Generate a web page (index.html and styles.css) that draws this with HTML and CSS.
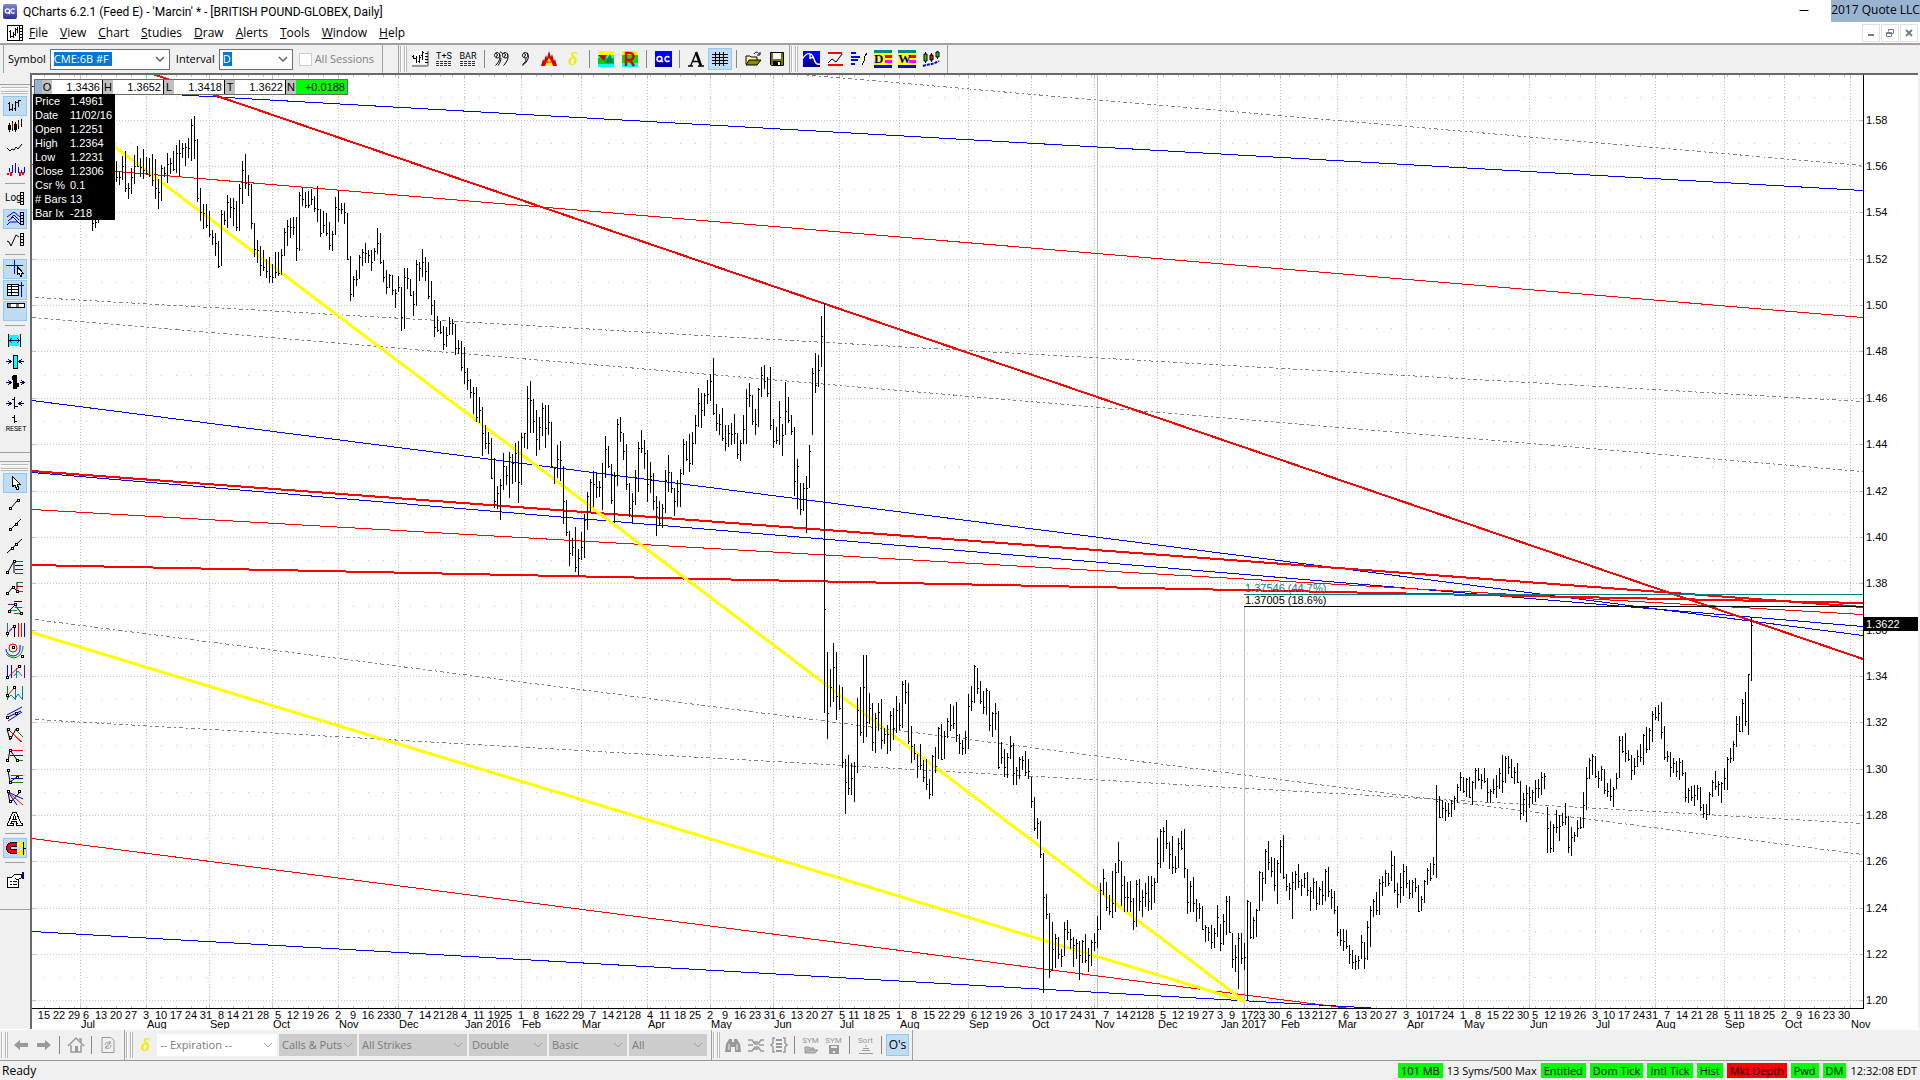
FILE: index.html
```html
<!DOCTYPE html>
<html lang="en">
<head>
<meta charset="utf-8">
<title>QCharts 6.2.1 (Feed E) - 'Marcin' * - [BRITISH POUND-GLOBEX, Daily]</title>
<link rel="stylesheet" href="styles.css">
</head>
<body>
<header class="titlebar">
  <svg class="app-icon" width="14" height="15" viewBox="0 0 14 15"><defs><linearGradient id="ig" x1="0" y1="0" x2="0" y2="1"><stop offset="0" stop-color="#7f86d8"/><stop offset="1" stop-color="#2a2f96"/></linearGradient></defs><rect width="14" height="15" rx="2" fill="url(#ig)"/><circle cx="4.500" cy="7" r="2.200" fill="none" stroke="#fff" stroke-width="1.200"/><path d="M5 8l2 2M11.500 5.500a2.200 2.200 0 1 0 0 3" fill="none" stroke="#fff" stroke-width="1.200"/></svg>
  <h1>QCharts 6.2.1 (Feed E) - 'Marcin' * - [BRITISH POUND-GLOBEX, Daily]</h1>
  <button class="minimize" aria-label="Minimize"></button>
  <span class="copyright">2017 Quote LLC</span>
</header>
<nav class="menubar">
  <svg class="doc-icon" width="16" height="16" viewBox="0 0 16 16" shape-rendering="crispEdges"><path d="M.5.5h15v15H.5zM12.500 1v14M13 3.500h2M13 6.500h2M13 9.500h2M13 12.500h2M3.500 5v8M2 6.500h2M4 11.500h2M6.500 7v6M8.500 3v8M10.500 2v6M7 9.500h2M9 4.500h2" fill="none" stroke="#000"/></svg>
  <button><u>F</u>ile</button><button><u>V</u>iew</button><button><u>C</u>hart</button><button><u>S</u>tudies</button><button><u>D</u>raw</button><button><u>A</u>lerts</button><button><u>T</u>ools</button><button><u>W</u>indow</button><button><u>H</u>elp</button>
  <span class="mdi">
    <button aria-label="Minimize chart"><svg width="8" height="8"><path d="M1 6h6" stroke="#708090" stroke-width="2"/></svg></button>
    <button aria-label="Restore chart"><svg width="8" height="8"><path d="M2.500 2.500v-2h5v4h-2M.5 3.500h5v4h-5zM.5 4.500h5" fill="none" stroke="#708090"/></svg></button>
    <button aria-label="Close chart"><svg width="8" height="8"><path d="M1 1l6 6M7 1l-6 6" stroke="#708090" stroke-width="2"/></svg></button>
  </span>
</nav>

<div class="toolbar top">
  <div class="band symbols">
    <label for="symbol">Symbol</label>
    <span class="combo symbol"><input id="symbol" value="CME:6B #F"><svg width="10" height="6"><path d="M1 1l4 4 4-4" fill="none" stroke="#606060" stroke-width="1.500"/></svg></span>
    <label for="interval">Interval</label>
    <span class="combo interval"><input id="interval" value="D"><svg width="10" height="6"><path d="M1 1l4 4 4-4" fill="none" stroke="#606060" stroke-width="1.500"/></svg></span>
    <label class="check"><input type="checkbox" disabled>All Sessions</label>
  </div>
  <div class="band spacer"></div>
  <div class="band">
    <i class="grip"></i>
    <button aria-label="New chart"><svg viewBox="0 0 18 18" shape-rendering="crispEdges"><path d="M1 1h14v13H1z" fill="#fff"/><path d="M2.500 5v4M1 6.500h2M3 8.500h2M5.500 6v7M8.500 5v8M7 11.500h2M8 7.500h2M11.500 1v9M10 5.500h2M11 2.500h2" stroke="#000"/><path d="M1 15.500h16M16.500 1v15" stroke="#999" stroke-width="2"/><path d="M14 3.500h3M14 6.500h3M14 9.500h3M14 12.500h3" stroke="#000"/></svg></button>
    <button class="word"><span>T+S</span><svg viewBox="0 0 18 6" shape-rendering="crispEdges"><path d="M1 .5h16M1 2.500h16M1 4.500h16" stroke="#333" stroke-dasharray="3 1"/></svg></button>
    <button class="word"><span>BAR</span><svg viewBox="0 0 18 6" shape-rendering="crispEdges"><path d="M1 .5h16M1 2.500h16M1 4.500h16" stroke="#333" stroke-dasharray="3 1"/></svg></button>
    <i class="sep"></i>
    <button aria-label="Quotes"><svg viewBox="0 0 18 18"><path d="M4 6.500a1.500 1.500 0 1 0-1.500-2c-1 3 4 5 5 2 .8-3-2-5-4-3.500M7.500 3.500c1.500 4 0 8-4 12M12 6.500a1.500 1.500 0 1 0-1.500-2c-1 3 4 5 5 2 .8-3-2-5-4-3.500M15.500 3.500c1.500 4 0 8-4 12M8 2c2 0 2 1 2.500 2M9 8c0 2-1 5-3 7.500" fill="none" stroke="#000"/></svg></button>
    <button aria-label="Quote"><svg viewBox="0 0 18 18"><path d="M8 6.500a1.500 1.500 0 1 0-1.500-2c-1 3 4 5 5 2 .8-3-2-5-4-3.500M11 2.500c3 4 1 9-4.500 13M10 8.500c0 3-1 4-3.500 6" fill="none" stroke="#000"/></svg></button>
    <button aria-label="Hot list"><svg viewBox="0 0 18 18"><path d="M1 16l2-7 1 2 2-6 1 3 2-7 2 6 1-3 2 7 1-2 2 7z" fill="#c00"/><path d="M5 16l2-5 2-3 2 3 2 5z" fill="#ff0"/><path d="M6 13l2-3 1 3 2-2v2" fill="#f33"/></svg></button>
    <button class="delta">δ</button>
    <i class="sep"></i>
    <button aria-label="Market map"><svg viewBox="0 0 18 18"><path d="M1 1h16v16H1z" fill="#0ff"/><path d="M1 1h16v4H1z" fill="#ff0"/><path d="M1 8h16v6H1z" fill="#0c0"/><path d="M1 5h9l-3 6z" fill="#c00"/><path d="M8 13l5-9 4 9z" fill="#084"/></svg></button>
    <button aria-label="Rankings"><svg viewBox="0 0 18 18"><path d="M1 1h16v16H1z" fill="#0ff"/><path d="M1 1h16v4H1z" fill="#ff0"/><path d="M1 5h16v8H1z" fill="#0d0"/><path d="M5 16V3h4a3.500 3.500 0 0 1 0 7H5m4 0l4 6" fill="none" stroke="#e00000" stroke-width="2.500"/></svg></button>
    <i class="sep"></i>
    <button aria-label="QCharts home"><svg viewBox="0 0 18 18"><path d="M1 1h17v16H1z" fill="#00f"/><path d="M1 12h17v5H1z" fill="#009"/><circle cx="5.500" cy="9" r="2.500" fill="none" stroke="#fff" stroke-width="1.500"/><path d="M6 10l3 2M15.500 7.500a2.500 2.500 0 1 0 0 3" fill="none" stroke="#fff" stroke-width="1.500"/></svg></button>
    <i class="sep"></i>
    <button aria-label="Text"><svg viewBox="0 0 18 18"><path d="M3.500 16L9 3M6 11.500h6M1 16h5M11 16h6" fill="none" stroke="#000" stroke-width="1.300"/><path d="M9 2l5 14" stroke="#000" stroke-width="2.600"/></svg></button>
    <button class="on" aria-label="Grid"><svg viewBox="0 0 18 18" shape-rendering="crispEdges"><path d="M4.500 2v14M8.500 2v14M12.500 2v14M1 4.500h16M1 7.500h16M1 10.500h16M1 13.500h16" stroke="#000"/></svg></button>
    <i class="sep"></i>
    <button aria-label="Open"><svg viewBox="0 0 18 18"><path d="M2 14V6h4l1 1h6v3" fill="#ff8" stroke="#000"/><path d="M2 15l3-5h12l-4 5z" fill="#880" stroke="#000"/><path d="M10 4c2-3 4-2 5 0m1-2v3h-3" fill="none" stroke="#000"/></svg></button>
    <button aria-label="Save"><svg viewBox="0 0 18 18"><path d="M2.500 2.500h13v13h-12l-1-1z" fill="#770" stroke="#000"/><path d="M5 3h8v6H5z" fill="#fff"/><path d="M5 11h8v5H5z" fill="#000"/><path d="M10 12h2v3h-2z" fill="#fff"/></svg></button>
  </div>
  <div class="band studies">
    <i class="grip"></i>
    <button aria-label="Study"><svg viewBox="0 0 18 18"><path d="M1 1h17v16H1z" fill="#00f"/><path d="M1 17C4 9 7 11 9 4l9 9v4z" fill="#008"/><path d="M1 8c4-6 9-6 11 1 1 4 3 6 6 5M12 9c-1-2-3-2-4 0M8 4v5" fill="none" stroke="#fff" stroke-width="1.400"/></svg></button>
    <button aria-label="Channel"><svg viewBox="0 0 18 18"><path d="M2 3h14M2 15h15" stroke="#f00" stroke-width="2"/><path d="M2 13l4-4 4 3 6-8" fill="none" stroke="#000"/></svg></button>
    <button aria-label="Volume profile"><svg viewBox="0 0 18 18" shape-rendering="crispEdges"><path d="M1 3h5M1 7h9M1 10h7M1 14h4" stroke="#00f" stroke-width="2"/><path d="M12 15l2-4 1-5 2-3" fill="none" stroke="#000"/></svg></button>
    <button class="letter">D</button>
    <button class="letter">W</button>
    <button aria-label="Candles"><svg viewBox="0 0 18 18"><path d="M3.500 2v11M9.500 3v9M15.500 1v8" stroke="#000"/><path d="M2 4h3v7H2zM14 2h3v5h-3z" fill="#0d0" stroke="#000"/><path d="M8 5h3v5H8z" fill="#f00" stroke="#000"/><path d="M1 16c5-2 9-1 16-5" fill="none" stroke="#00f" stroke-width="2" stroke-dasharray="3 1"/></svg></button>
  </div>
</div>

<main class="workspace">
  <aside class="rail">
    <div class="dock first"></div>
    <div class="dock charts">
      <i class="hgrip"></i>
      <button class="on" aria-label="Bars"><svg><path d="M6.500 6v9M5 7.500h2M7 13.500h2M9.500 8v7M12.500 5v10M11 12.500h2M13 6.500h2M15.500 4v7M16 4.500h2" class="k"/></svg></button>
      <button aria-label="Candlesticks"><svg><path d="M6.500 6v9M9.500 4v10M12.500 5v10M15.500 3v9M18.500 2v8" class="k"/><path d="M5.500 8v4h2v-4zM11.500 7v5h2v-5z" class="k"/><path d="M9 6v5M15 5v4" stroke="#b00"/></svg></button>
      <button aria-label="Line"><svg><path d="M4 10l3 3 2-2 2 1 2-3 2 2 4-5" class="k s"/></svg></button>
      <button aria-label="Histogram"><svg><path d="M6.500 9v4M9.500 6v8M12.500 4v10M15.500 8v6M18.500 11v3M21.500 8v6" stroke="#00f"/><path d="M4.500 14v2M7.500 13v4M16.500 13v4M19.500 13v3" stroke="#f00" stroke-width="2"/></svg></button>
      <i class="hsep"></i>
      <button class="log"><span>Log</span><svg><path d="M17.500 4.500h3v12h-3zM18 7.500h3M18 10.500h3M18 13.500h3" class="k"/></svg></button>
      <button class="on" aria-label="Scale to studies"><svg><path d="M4 8l7-5 6 5" class="b s"/><path d="M4 16l3-3h8l3 3M8 9l3-3 5 5" class="b s"/><path d="M5 12l5-4 6 6" class="k s"/><path d="M17.500 3.500h3v12h-3zM18 6.500h3M18 9.500h3M18 12.500h3" class="k"/></svg></button>
      <button aria-label="Scale to data"><svg><path d="M4 11l2 1 2 4 5-11 3 2" class="k s"/><path d="M17.500 3.500h3v12h-3zM18 6.500h3M18 9.500h3M18 12.500h3" class="k"/></svg></button>
      <i class="hsep"></i>
      <button class="on" aria-label="Crosshair"><svg><path d="M11.500 1v14M3 6.500h17" stroke="#00f"/><path d="M14 7v9l2-2 2 4 1-1-1-3h2z" fill="#fff" stroke="#000"/></svg></button>
      <button class="on" aria-label="Data window"><svg><path d="M4 4h11v11H4z" fill="#fff" stroke="#000"/><path d="M4 6.500h11M4 9.500h11M4 12.500h11M8.500 4v11" class="k"/><path d="M18.500 2v15M15 5.500h6" stroke="#00f"/></svg></button>
      <button class="on" aria-label="Quote bar"><svg><path d="M4 2.500h17v4H4z" fill="#fff" stroke="#000"/><path d="M5 3h3v3H5zM13 3h3v3h-3z" fill="#777"/></svg></button>
      <i class="hsep"></i>
      <button aria-label="Bar width fit"><svg><path d="M6 5h10v11H6z" fill="#0ff"/><path d="M5.500 4v13M17.500 4v13" class="k"/><path d="M7 10.500h9M9 8l-2 2.500L9 13M14 8l2 2.500-2 2.500" class="n"/></svg></button>
      <button aria-label="Narrow bars"><svg><path d="M10 4h4v13h-4z" fill="#0ff" stroke="#000"/><path d="M3 10.500h4M5 8l3 2.500L5 13M21 10.500h-4M19 8l-3 2.500L19 13" class="n"/></svg></button>
      <button aria-label="Thick bars"><svg><path d="M12 3v14M9 6h3M12 13h4" stroke="#000" stroke-width="4"/><path d="M3 10.500h4M5 8l3 2.500L5 13M21 10.500h-4M18 8l3 2.500L18 13" class="n"/></svg></button>
      <button aria-label="Wide spacing"><svg><path d="M11.500 4v12M9 6.500h3M12 13.500h3" class="k"/><path d="M3 10.500h4M5 8l3 2.500L5 13M21 10.500h-4M19 8l-3 2.500L19 13" class="n"/></svg></button>
      <button class="reset"><svg><path d="M11.500 1v8M9 3.500h3M12 7.500h2" class="k"/></svg><span>RESET</span></button>
    </div>
    <div class="dock gap"></div>
    <div class="dock draw">
      <i class="hgrip"></i>
      <button class="on" aria-label="Pointer"><svg><path d="M9 3v11l3-2 2 5 2-1-2-5h3z" fill="#fff" stroke="#000"/></svg></button>
      <button aria-label="Segment"><svg><path d="M8 14l6-7" class="k s"/><path d="M6.500 13.500h2v2h-2zM14.500 5.500h2v2h-2z" class="w"/></svg></button>
      <button aria-label="Ray"><svg><path d="M8 14L18 4" class="k s"/><path d="M6.500 13.500h2v2h-2zM12.500 8.500h2v2h-2z" class="w"/></svg></button>
      <button aria-label="Line tool"><svg><path d="M4 17L19 3" class="k s"/><path d="M8.500 11.500h2v2h-2zM12.500 7.500h2v2h-2z" class="w"/></svg></button>
      <button aria-label="Retracement"><svg><path d="M5 15l6-11v12" class="k s"/><path d="M12 4.500h8" class="g"/><path d="M12 8.500h8" class="n"/><path d="M12 12.500h8" class="m"/><path d="M12 16.500h8" class="p"/><path d="M3.500 14.500h2v2h-2zM10.500 3.500h2v2h-2z" class="w"/></svg></button>
      <button aria-label="Extension"><svg><path d="M5 15l5-6 4 4V4" class="k s"/><path d="M14 4.500h6M14 13.500h6" class="g"/><path d="M14 8.500h6" class="m"/><path d="M3.500 14.500h2v2h-2zM9.500 8.500h2v2h-2zM13.500 12.500h2v2h-2z" class="w"/></svg></button>
      <button aria-label="Projection"><svg><path d="M6 12l6-6 6 8" class="k s"/><path d="M11 2.500h8" class="n"/><path d="M5 5.500h9" class="p"/><path d="M12 8.500h7" class="r"/><path d="M6 11.500h8" class="t"/><path d="M11 14.500h8" class="g"/><path d="M5.500 11.500h2v2h-2zM11.500 4.500h2v2h-2zM17.500 13.500h2v2h-2z" class="w"/></svg></button>
      <button aria-label="Time zones"><svg><path d="M4.500 3v14" class="t"/><path d="M11.500 5v12" class="k"/><path d="M15.500 3v14M18.500 3v14" class="r"/><path d="M21.500 3v14" class="b"/><path d="M5 13l6-7" stroke="#f0f"/><path d="M3.500 12.500h2v2h-2zM10.500 5.500h2v2h-2z" class="w"/></svg></button>
      <button aria-label="Arcs"><svg><circle cx="10" cy="7" r="4" class="r s"/><path d="M3 8a7 7 0 0 0 14 0V4" class="b s"/><path d="M3 13c8 8 17 2 17-8" class="g s"/><path d="M9.500 5.500h2v2h-2zM18.500 14.500h2v2h-2z" class="w"/></svg></button>
      <button aria-label="Cycles"><svg><path d="M4.500 3v13M8.500 3v13" class="b"/><path d="M11 14l4-5 4 5" class="t s"/><path d="M21.500 3v13" class="p"/><path d="M13.500 6v10" class="t"/><path d="M5 15L17 4" class="r s"/><path d="M3.500 14.500h2v2h-2zM15.500 3.500h2v2h-2z" class="w"/></svg></button>
      <button aria-label="Cycle lines"><svg><path d="M4.500 3v14" class="g"/><path d="M12.500 6v11M19.500 3v14M5 15l3-3 4 4 3-5 4 5" class="t s"/><path d="M5 12l7-8" class="r s"/><path d="M3.500 11.500h2v2h-2zM10.500 3.500h2v2h-2z" class="w"/></svg></button>
      <button aria-label="Parallel lines"><svg><path d="M4 11L19 3M5 17l14-9" class="b s"/><path d="M5 13l13-6" class="k s"/><path d="M3.500 12.500h2v2h-2zM12.500 8.500h2v2h-2z" class="w"/></svg></button>
      <button aria-label="Pitchfork"><svg><path d="M4 4l3 11 6-11" class="k s"/><path d="M5 4l13 13M9 8l10 9" class="r s"/><path d="M14 6l6 6" class="g s"/><path d="M4.500 3.500h2v2h-2zM6.500 11.500h2v2h-2zM13.500 3.500h2v2h-2z" class="w"/></svg></button>
      <button aria-label="Levels"><svg><path d="M5 15l2-11 7 10" class="k s"/><path d="M7 4.500h13" class="r"/><path d="M7 9.500h13" class="b"/><path d="M14 14.500h6" class="g"/><path d="M3.500 13.500h2v2h-2zM6.500 3.500h2v2h-2zM13.500 13.500h2v2h-2z" class="w"/></svg></button>
      <button aria-label="Price levels"><svg><path d="M5 3l2 12 7-5" class="k s"/><path d="M8 8.500h12" class="r"/><path d="M8 11.500h12" class="b"/><path d="M8 15.500h12" class="g"/><path d="M4.500 2.500h2v2h-2zM6.500 14.500h2v2h-2zM13.500 9.500h2v2h-2z" class="w"/></svg></button>
      <button aria-label="Fan"><svg><path d="M5 4l2 11L17 4" class="k s"/><path d="M5 4l15 7M5 4l9 13" class="b s"/><path d="M5 4l15 13" class="r s"/><path d="M4.500 2.500h2v2h-2zM6.500 12.500h2v2h-2zM15.500 2.500h2v2h-2z" class="w"/></svg></button>
      <button aria-label="Label"><svg><path d="M4 16v-2h1l5-11h3l5 11h1v2h-6v-2h1l-1-2H9l-1 2h2v2zM10 10h3l-1.500-4z" fill="#fff" stroke="#000" fill-rule="evenodd"/></svg></button>
      <i class="hsep"></i>
      <button class="on" aria-label="Magnet"><svg><path d="M14 6.500H9a3.500 3.500 0 0 0 0 7h5" fill="none" stroke="#000" stroke-width="5"/><path d="M14 6.500H9a3.500 3.500 0 0 0 0 7h5" fill="none" stroke="#e00" stroke-width="3"/><path d="M15 5v4M15 12v4" stroke="#fff" stroke-width="2"/><path d="M18 4v5M18 12v5" stroke="#ff0" stroke-width="4" stroke-dasharray="1 1"/><path d="M20.500 4v13M20 10.500h3" stroke="#000"/></svg></button>
      <i class="hsep"></i>
      <button class="props" aria-label="Properties"><svg><path d="M4.500 6.500h11v10h-11zM7 10.500h2M10 10.500h4M7 13.500h2M10 13.500h4" fill="#fff" stroke="#000"/><path d="M8 7l4-4h6v4l-4 2-2-2" fill="#fff" stroke="#000"/><path d="M19 1h2v7h-2z" fill="#008"/></svg></button>
    </div>
    <div class="dock last"></div>
  </aside>

  <section class="chart">
    <div class="plot">
      <svg id="plot" viewBox="32 75 1832 934" preserveAspectRatio="none" shape-rendering="crispEdges"></svg>
      <svg id="notes" class="notes"></svg>
      <div class="ohlc"><i></i><b>O</b><span>1.3436</span><b>H</b><span>1.3652</span><b>L</b><span>1.3418</span><b>T</b><span>1.3622</span><b>N</b><span class="up">+0.0188</span></div>
      <dl class="readout">
        <dt>Price</dt><dd>1.4961</dd><dt>Date</dt><dd>11/02/16</dd><dt>Open</dt><dd>1.2251</dd><dt>High</dt><dd>1.2364</dd><dt>Low</dt><dd>1.2231</dd><dt>Close</dt><dd>1.2306</dd><dt>Csr %</dt><dd>0.1</dd><dt># Bars</dt><dd>13</dd><dt>Bar Ix</dt><dd>-218</dd>
      </dl>
    </div>
    <svg id="prices" class="prices"></svg>
    <svg id="dates" class="dates"></svg>
  </section>
</main>

<div class="toolbar bottom">
  <div class="band nav">
    <i class="grip"></i>
    <button aria-label="Back"><svg viewBox="0 0 18 18"><path d="M2 9l6-5v3h8v4H8v3z" fill="#999"/></svg></button>
    <button aria-label="Forward"><svg viewBox="0 0 18 18"><path d="M16 9l-6-5v3H2v4h8v3z" fill="#999"/></svg></button>
    <i class="sep"></i>
    <button aria-label="Home"><svg viewBox="0 0 18 18"><path d="M1 10l8-8 8 8M4 9v7h10V9M12 3h2v3" fill="none" stroke="#999" stroke-width="1.500"/><path d="M8 10h3v6H8z" fill="#999"/></svg></button>
    <i class="sep"></i>
    <button aria-label="Refresh"><svg viewBox="0 0 18 18"><path d="M3 1.500h9l3 3v12H3z" fill="none" stroke="#999"/><path d="M6 9c0-3 4-4 6-1M12 9c0 4-4 4-6 2M11 5v3H8M7 13v-3h3" fill="none" stroke="#999"/></svg></button>
  </div>
  <div class="band options">
    <i class="grip"></i>
    <button class="delta">δ</button>
    <label class="pick wide open"><select aria-label="Expiration" disabled><option>-- Expiration --</option></select><svg width="10" height="6"><path d="M1 1l4 4 4-4" fill="none" stroke="#a8a8a8"/></svg></label>
    <label class="pick"><select aria-label="Type" disabled><option>Calls &amp; Puts</option></select><svg width="10" height="6"><path d="M1 1l4 4 4-4" fill="none" stroke="#a0a0a0"/></svg></label>
    <label class="pick mid"><select aria-label="Strikes" disabled><option>All Strikes</option></select><svg width="10" height="6"><path d="M1 1l4 4 4-4" fill="none" stroke="#a0a0a0"/></svg></label>
    <label class="pick"><select aria-label="Layout" disabled><option>Double</option></select><svg width="10" height="6"><path d="M1 1l4 4 4-4" fill="none" stroke="#a0a0a0"/></svg></label>
    <label class="pick"><select aria-label="Columns" disabled><option>Basic</option></select><svg width="10" height="6"><path d="M1 1l4 4 4-4" fill="none" stroke="#a0a0a0"/></svg></label>
    <label class="pick"><select aria-label="Filter" disabled><option>All</option></select><svg width="10" height="6"><path d="M1 1l4 4 4-4" fill="none" stroke="#a0a0a0"/></svg></label>
  </div>
  <div class="band tools">
    <i class="grip"></i>
    <button aria-label="Find"><svg viewBox="0 0 18 18"><path d="M1 16l1-8 3-5h3v3h2V3h3l3 5 1 8h-6v-5H7v5z" fill="#999"/><path d="M5 8v6M13 8v6" stroke="#eee"/></svg></button>
    <button aria-label="Merge"><svg viewBox="0 0 18 18"><path d="M1 4h4l3 4h3l3-4h3M1 15h4l3-4h3l3 4h3M1 9h5M12 9h5M7 6h4M7 13h4" fill="none" stroke="#999" stroke-width="1.500"/></svg></button>
    <button aria-label="Group"><svg viewBox="0 0 18 18"><path d="M5 2H3v5L1 9l2 2v5h2M13 2h2v5l2 2-2 2v5h-2" fill="none" stroke="#999" stroke-width="1.500"/><path d="M6 4h6M6 8h6M6 11h6M6 15h6" stroke="#999" stroke-width="2"/></svg></button>
    <i class="sep"></i>
    <button class="word dim"><span>SYM</span><svg viewBox="0 0 18 9"><path d="M3 8V2h4l1 1h4v2M3 8l3-3h10l-3 3z" fill="#bbb" stroke="#999"/></svg></button>
    <button class="word dim"><span>SYM</span><svg viewBox="0 0 18 9"><path d="M4 0h10v9H4z" fill="#999"/><path d="M6 1h6v2H6zM8 6h2v2H8z" fill="#eee"/></svg></button>
    <i class="sep"></i>
    <button class="word dim"><span>Sort</span><svg viewBox="0 0 18 9"><path d="M8 1h2M6 3.500h6M5 5.500h8M2 8.500h14" stroke="#999"/></svg></button>
    <i class="sep"></i>
    <button class="on">O's</button>
  </div>
</div>

<footer class="status">
  <span class="ready">Ready</span>
  <span class="ok">101 MB</span><span class="count">13 Syms/500 Max</span><span class="ok">Entitled</span><span class="ok">Dom Tick</span><span class="ok">Intl Tick</span><span class="ok">Hist</span><span class="bad">Mkt Depth</span><span class="ok">Pwd</span><span class="ok">DM</span><span>12:32:08 EDT</span>
</footer>
<script src="chart.js"></script>
</body>
</html>
```

FILE: styles.css
```css
* { box-sizing: border-box; }
body { margin: 0; height: 100vh; display: flex; flex-direction: column; overflow: hidden; background: #f0f0f0; color: #000; font: 12px/16px "Open Sans", "Noto Sans", sans-serif; }
button, input, select { font: inherit; color: inherit; margin: 0; }
button { padding: 0; border: 1px solid transparent; background: none; display: grid; place-items: center; }
i { flex: none; }

.titlebar { flex: none; height: 22px; background: #fff; display: flex; align-items: center; padding-left: 3px; gap: 6px; }
.titlebar h1 { margin: 0; flex: 1; font: 400 12px/16px Roboto, "Open Sans", sans-serif; padding-top: 2px; }
.minimize { width: 10px; border-top: 1px solid #000; height: 1px; margin-right: 16px; }
.copyright { width: 89px; height: 22px; background: #99b4d1; text-align: center; line-height: 20px; }

.menubar { flex: none; height: 21px; background: #fff; display: flex; align-items: center; padding: 0 2px 0 7px; }
.menubar > button { padding: 0 5px; display: block; }
.mdi { margin-left: auto; display: flex; gap: 1px; }
.mdi button { width: 18px; height: 18px; border: 1px solid #e0e0e0; }

.toolbar { flex: none; display: flex; background: #f0f0f0; }
.toolbar.top { height: 30px; border-top: 2px solid #a0a0a0; }
.toolbar.bottom { height: 32px; border-top: 1px solid #fff; border-bottom: 1px solid #999; }
.band { display: flex; align-items: center; border-right: 1px solid #a0a0a0; }
.band button { width: 24px; height: 22px; }
.band button svg { width: 18px; height: 18px; }
.grip { width: 7px; height: 26px; margin: 0 1px; border: solid #b8b8b8; border-width: 0 1px; background: linear-gradient(90deg, #fff 1px, transparent 1px 3px, #b8b8b8 3px 4px, #fff 4px); }
.sep { width: 1px; height: 18px; background: #888; margin: 0 4px; }
.band .on, .rail .on { background: #c0dcf3; border-color: #90c8f6; }

.symbols { width: 380px; margin-left: 3px; border-left: 1px solid #a0a0a0; padding-left: 4px; font-size: 11px; }
.spacer { width: 16px; }
.combo { display: flex; align-items: center; justify-content: space-between; height: 21px; margin: 0 6px 0 4px; padding: 0 4px 0 3px; background: #fff; border: 1px solid #707070; }
.combo input { border: 0; padding: 0; height: 14px; background: #0078d7; color: #fff; font: 11px/14px "Open Sans", sans-serif; }
.combo.symbol { width: 120px; }
.combo.symbol input { width: 58px; }
.combo.interval { width: 74px; }
.combo.interval input { width: 9px; }
.check { display: flex; align-items: center; gap: 3px; color: #808080; white-space: nowrap; }
.check input { appearance: none; width: 13px; height: 13px; border: 1px solid #ccc; background: #fff; }
.band .word { display: flex; flex-direction: column; align-items: center; justify-content: center; font: 9px/9px Roboto, sans-serif; }
.band .word svg { height: 6px; }
.band .word.dim { color: #999; font-size: 8px; line-height: 8px; }
.band .word.dim svg { height: 9px; }
.band .delta { color: #ee0; font: italic bold 18px/18px "Liberation Serif", serif; }
.band .letter { width: 18px; height: 18px; margin: 0 3px; border: 0; background: linear-gradient(#088 3px, transparent 3px 15px, #00f 15px), linear-gradient(90deg, #ff0 11px, transparent 11px), linear-gradient(#ff0 5px, #f00 5px 8px, #ff0 8px 10px, #f0f 10px 13px, #ff0 13px); color: #008; font: bold 13px/18px "Liberation Serif", serif; justify-items: start; }
.studies { width: 158px; }

.workspace { flex: 1; min-height: 0; display: flex; }
.rail { width: 30px; display: flex; flex-direction: column; }
.dock { flex: none; border-bottom: 1px solid #a0a0a0; padding-left: 3px; }
.dock.first { height: 12px; }
.dock.charts { height: 368px; }
.dock.gap { height: 9px; }
.dock.draw { height: 448px; }
.dock.last { flex: 1; border: 0; }
.rail button { width: 24px; height: 20px; margin-bottom: 1px; display: block; position: relative; }
.rail svg { display: block; width: 24px; height: 20px; margin: -1px; shape-rendering: crispEdges; fill: none; }
.rail .s { shape-rendering: auto; }
.rail .props { margin-top: 8px; }
.rail .log, .rail .reset { font: 10px/18px Roboto, sans-serif; }
.rail .log span { position: absolute; left: 1px; top: 0; }
.rail .reset span { position: absolute; left: 0; width: 24px; bottom: 0; font-size: 7px; line-height: 7px; text-align: center; }
.hgrip { display: block; height: 7px; margin: 2px 2px 2px -2px; border: solid #b8b8b8; border-width: 1px 0; background: linear-gradient(#fff 1px, transparent 1px 3px, #b8b8b8 3px 4px, #fff 4px); }
.hsep { display: block; width: 20px; height: 1px; margin: 4px 2px; background: #a0a0a0; }
.k { stroke: #000; } .b { stroke: #00f; } .n { stroke: #008; } .r { stroke: #f00; } .g { stroke: #080; } .m { stroke: #800; } .p { stroke: #808; } .t { stroke: #088; } .w { stroke: #000; fill: #fff; }

.chart { flex: 1; min-width: 0; display: grid; grid-template: 1fr 20px / 1fr 54px; background: #fff; border: solid #696969; border-width: 2px 0 0 2px; margin-right: 2px; font: 11px/14px "Liberation Sans", Arial, sans-serif; }
.chart svg { display: block; width: 100%; height: 100%; overflow: visible; }
.plot { position: relative; min-width: 0; min-height: 0; }
.plot svg { position: absolute; inset: 0; }
.plot #plot { overflow: hidden; }
.prices { min-height: 0; }
.chart text { fill: #000; }
.chart .teal { fill: #088080; }
.chart .now { fill: #fff; }
.ohlc { position: absolute; left: 2px; top: 4px; display: flex; height: 16px; border: 1px solid #696969; background: #fff; }
.ohlc i { width: 7px; background: #99b4d1; }
.ohlc b { width: 10px; background: #c0c0c0; font-weight: 400; text-align: center; }
.ohlc span { width: 51px; padding-right: 2px; text-align: right; border-right: 1px solid #000; }
.ohlc .up { background: #0f0; border: 0; }
.readout { position: absolute; left: 1px; top: 19px; margin: 0; width: 82px; background: #000; color: #fff; display: grid; grid-template-columns: 35px 1fr; padding-left: 2px; }
.readout dd { margin: 0; }

.bottom .band button { width: 23px; }
.nav { width: 125px; }
.options { width: 587px; }
.pick { display: grid; grid-template-columns: 1fr 14px; align-items: center; width: 78px; height: 22px; margin-right: 2px; background: #ccc; color: #7a7a7a; }
.pick.wide { width: 120px; }
.pick.mid { width: 108px; }
.pick.open { background: #fff; }
.pick select { appearance: none; grid-area: 1 / 1 / 2 / 3; width: 100%; height: 22px; border: 0; padding: 0 3px; background: none; opacity: 1; font-size: 11px; color: #7a7a7a; }
.pick svg { grid-area: 1 / 2; }
.tools { width: 201px; }

.status { flex: none; height: 19px; display: flex; align-items: center; gap: 4px; padding: 0 3px 0 2px; font-size: 11px; white-space: nowrap; }
.ready { margin-right: auto; font-size: 12px; }
.ok, .bad { padding: 0 3px; line-height: 15px; background: #0f0; }
.bad { background: #f00; }
```

FILE: chart.js
```js
// Daily bars, 3 px apart. Each segment holds high,low,close as offsets
// below `top`, in 1/unit px.
const segments = [
  { x: 92, top: 80, unit: 3, bars: '380,452,430 380,443,425 380,430,400' },
  { x: 116, top: 80, unit: 3, bars: '243,307,290 272,315,291 228,300,257 213,335,325 310,357,325 265,342,292 225,312,257 198,262,257 234,292,262 208,298,270 231,286,280 235,292,285 223,318,300 238,357,325 296,386,337 255,363,265 262,292,280 220,308,252 234,282,250 214,272,268 195,280,218 180,291,220 189,233,205 189,258,200 174,235,203 117,242,135 108,236,180 177,365,355 323,422,395 371,447,398 373,444,435 393,470,463 450,495,470 458,528,490 483,563,557 390,558,403 394,434,420 345,443,365 353,413,380 353,437,385 362,452,440 312,453,325 242,372,270 222,327,310 285,347,313 312,446,428 428,530,507 480,548,510 498,588,556 511,573,560 538,593,572 530,609,588 553,609,590 515,593,575 516,587,578 508,585,525 443,528,457 420,497,437 414,473,440 412,464,440 412,543,505 336,512,346 323,377,357 335,383,376 332,384,375 327,376,358 348,395,385 318,425,388 387,470,458 393,458,435 400,467,460 427,510,495 453,513,463 350,465,380 333,427,387 368,403,387 370,432,397 400,540,537 527,662,643 588,650,597 570,618,598 526,597,532 508,558,517 489,550,520 510,548,525 510,573,545 504,544,512 443,523,490 460,552,545 540,607,590 570,642,620 583,625,585 585,644,630 627,683,640 588,635,620 620,753,712 563,746,592 565,627,595 597,648,645 632,708,672 540,677,553 545,602,565 508,591,545 530,603,572 546,657,648 603,705,675 659,771,740 708,755,750 722,763,755 737,810,793 740,802,765 711,766,730 717,766,730 731,825,803 780,822,805 783,872,860 802,912,875 865,930,900 896,954,935 922,1002,940 922,1025,1010 950,1028,990 982,1128,1060 1036,1108,1090 1057,1122,1088 1073,1197,1193 1133,1284,1262 1217,1287,1240 1197,1320,1215 1118,1230,1158 1157,1215,1185 1117,1254,1130 1122,1212,1148 1088,1205,1120 1083,1270,1205 1058,1215,1070 1058,1105,1060 917,1107,953 903,1060,960 957,1060,1022 990,1128,1077 1010,1109,1042 968,1067,985 976,1104,1043 975,1064,1025 1025,1164,1157 1160,1212,1165 1095,1193,1138 1083,1203,1140 1157,1332,1262 1260,1368,1357 1353,1457,1420 1373,1428,1400 1342,1475,1460 1407,1487,1433 1356,1440,1402 1303,1435,1320 1237,1350,1247 1197,1300,1206 1173,1282,1212 1180,1253,1220 1203,1250,1220 1148,1290,1178 1067,1195,1108 1098,1163,1158 1152,1272,1260 1177,1330,1187 1017,1217,1033 1010,1085,1055 1058,1140,1113 1092,1230,1213 1210,1312,1285 1240,1330,1262 1170,1275,1192 1085,1235,1105 1050,1118,1105 1080,1168,1120 1110,1265,1213 1145,1240,1187 1178,1290,1262 1247,1368,1280 1262,1338,1330' },
  { x: 662, top: 280, unit: 2.8, bars: '627,693,638 532,652,560 490,593,537 537,597,583 583,661,620 560,636,590 528,636,540 445,545,460 452,507,502 430,538,512 425,517,457 377,458,407 302,412,343 315,413,365 315,380,323 280,347,320 264,338,282 217,377,373 347,423,400 374,433,404 358,452,443 407,479,455 407,468,429 400,463,430 375,460,427 427,501,487 447,507,457 378,458,418 305,458,330 288,355,322 323,406,395 360,434,404 302,412,305 243,328,267 237,304,284 272,328,315 244,420,407 388,471,451 411,460,447 338,462,384 404,493,433 286,434,368 328,400,393 377,433,424 412,606,564 500,640,522 567,658,640 568,647,583 549,709,583 462,582,480 246,434,260 204,317,293 210,299,253 101,244,158 65,1212,922 1042,1286,1211 1088,1195,1140 1016,1182,1084 1042,1232,1165 1134,1204,1197 1140,1365,1350 1341,1496,1405 1330,1442,1422 1351,1442,1395 1350,1462,1360 1170,1380,1205 1140,1278,1265 1050,1297,1140 1050,1280,1238 1156,1242,1198 1183,1320,1293 1212,1323,1226 1184,1263,1210 1173,1313,1288 1255,1300,1272 1245,1328,1272 1206,1320,1217 1198,1288,1255 1165,1268,1205 1184,1260,1245 1122,1254,1130 1120,1188,1153 1128,1300,1292 1250,1352,1305 1298,1345,1325 1327,1395,1360 1300,1372,1358 1345,1405,1392 1342,1427,1412 1397,1452,1440 1330,1445,1333 1308,1380,1362 1252,1340,1255 1243,1345,1340 1262,1342,1278 1226,1282,1235 1186,1262,1245 1193,1258,1240 1182,1293,1273 1272,1327,1297 1288,1330,1310 1263,1327,1280 1160,1312,1193 1137,1207,1180 1078,1183,1082 1085,1160,1142 1123,1186,1180 1150,1215,1195 1143,1218,1148 1150,1263,1245 1210,1280,1213 1184,1260,1213 1207,1370,1364' },
  { x: 1001, top: 560, unit: 3, bars: '546,611,590 567,650,620 580,654,592 528,597,558 549,675,638 622,674,630 590,656,596 587,629,600 573,648,637 597,658,632 650,743,724 711,812,805 773,837,790 783,893,883 880,1299,1012 1002,1077,1063 1060,1253,1232 1085,1232,1168 1122,1223,1135 1130,1197,1182 1168,1221,1187 1087,1188,1108 1080,1139,1115 1107,1168,1138 1130,1222,1155 1138,1197,1148 1142,1260,1185 1140,1210,1142 1121,1210,1200 1165,1235,1185 1141,1217,1147 1120,1172,1147 1068,1163,1108 968,1110,990 927,1005,955 965,1052,1042 1005,1065,1052 933,1075,1030 909,1055,935 846,938,900 903,1037,975 947,1055,1012 965,1055,1012 962,1055,1024 1013,1110,1082 960,1101,972 958,1053,1023 990,1070,1012 970,1042,1000 947,1052,1023 947,1050,975 953,1028,965 834,970,910 808,925,814 801,905,814 780,868,850 846,927,883 828,942,920 888,940,925 834,925,850 813,870,865 807,953,925 927,1062,1027 962,1055,978 950,1057,1030 1017,1087,1045 1030,1077,1045 1037,1111,1108 1095,1145,1102 1100,1143,1117 1095,1167,1145 1103,1165,1120 1035,1132,1070 1093,1172,1150 1062,1155,1082 1008,1125,1022 1008,1118,1115 1118,1225,1198 1155,1236,1190 1118,1287,1135 1120,1213,1195 1150,1230,1190 1020,1322,1023 1026,1137,1130 1071,1137,1080 1047,1132,1050 933,1052,937 935,1023,955 867,972,873 843,930,905 890,950,933 893,992,975 900,1032,910 840,940,857 825,957,950 942,992,978 968,1020,985 935,1077,965 933,990,943 911,985,963 957,1007,975 940,985,955 937,1007,990 980,1053,993 955,1017,965 963,1050,1030 980,1035,988 963,1035,1005 927,1022,932 921,1010,993 987,1048,1010 993,1062,1050 1038,1128,1117 1107,1157,1140 1107,1173,1142 1110,1167,1157 1155,1213,1183 1170,1227,1205 1185,1230,1203 1188,1226,1200 1125,1197,1147 1147,1227,1195 1083,1200,1100 1037,1162,1050 1018,1071,1023 996,1065,1050 957,1065,970 948,1007,965 931,980,940 938,977,970 873,962,915 888,1000,990 970,1045,1003 940,1029,980 911,1008,932 917,985,970 960,1017,1000 960,1014,965 954,997,980 975,1055,1052 1008,1053,1018 960,1029,963 924,975,930 909,963,955 891,945,912 675,953,723 708,773,770 720,774,745 726,783,750 730,770,760 720,770,728 708,750,715 672,728,682 635,693,652 650,698,693 653,711,658 650,713,710 662,735,667 625,686,630 625,663,657 641,687,660 625,668,662 655,725,697 687,728,693 657,702,688 645,713,677 623,687,640 585,698,662 587,668,595 588,642,620 597,655,650 620,671,635 609,668,665 663,780,758 698,767,718 675,786,700 682,745,710 690,731,695 660,725,685 656,713,685 635,706,650 640,688,648 740,878,805 784,878,865 792,877,800 750,820,800 765,843,797 760,798,785 728,795,772 768,878,862 800,887,830 816,845,825 780,830,803 770,808,800 697,803,735 622,750,653 595,657,600 583,645,587 587,655,648 632,683,655 618,663,628 627,702,690 668,710,692 657,723,708 682,741,687 640,687,653 528,655,540 527,578,574 518,606,578 570,602,597 585,660,630 593,645,617 570,621,588 552,607,590 522,615,524 502,578,567 503,570,510 453,545,463 440,480,470 434,483,460 426,537,517 498,600,590 573,605,588 577,650,620 594,640,608 603,650,632 594,660,605 600,648,640 637,726,710 684,728,690 678,722,712 675,738,705 675,720,685 682,752,742 732,774,758 732,780,762 697,765,703 660,710,667 632,690,677 663,707,673 666,728,670 625,690,655 592,690,598 564,608,593 543,602,553 468,560,493 468,515,513 417,516,430 396,498,482 343,525,343 172,362,195' }
];

const months = [[80, 'Jul'], [146, 'Aug'], [209, 'Sep'], [272, 'Oct'], [338, 'Nov'], [398, 'Dec'], [464, 'Jan 2016'], [521, 'Feb'], [581, 'Mar'], [647, 'Apr'], [710, 'May'], [773, 'Jun'], [839, 'Jul'], [899, 'Aug'], [968, 'Sep'], [1031, 'Oct'], [1094, 'Nov'], [1157, 'Dec'], [1220, 'Jan 2017'], [1280, 'Feb'], [1337, 'Mar'], [1406, 'Apr'], [1463, 'May'], [1529, 'Jun'], [1595, 'Jul'], [1655, 'Aug'], [1724, 'Sep'], [1784, 'Oct'], [1850, 'Nov']];

const weeks = '44:15 59:22 74:29 86:6 101:13 116:20 131:27 146:3 161:10 176:17 191:24 206:31 221:8 233:14 248:21 263:28 278:5 293:12 308:19 323:26 338:2 353:9 368:16 383:23 395:30 410:7 425:14 439:21 452:28 464:4 479:11 494:19 506:25 521:1 536:8 551:16 563:22 578:29 593:7 608:14 622:21 635:28 650:4 665:11 680:18 695:25 710:2 725:9 740:16 755:23 770:31 782:6 797:13 812:20 827:27 842:5 854:11 869:18 884:25 899:1 914:8 929:15 944:22 959:29 974:6 986:12 1001:19 1016:26 1031:3 1046:10 1061:17 1076:24 1090:31 1106:7 1122:14 1136:21 1148:28 1163:5 1178:12 1193:19 1208:27 1220:3 1232:9 1247:17 1259:23 1274:30 1289:6 1304:13 1318:21 1331:27 1346:6 1361:13 1376:20 1391:27 1406:3 1422:10 1434:17 1448:24 1463:1 1478:8 1493:15 1508:22 1523:30 1535:5 1550:12 1565:19 1580:26 1595:3 1609:10 1624:17 1639:24 1652:31 1667:7 1682:14 1697:21 1712:28 1727:5 1739:11 1754:18 1769:25 1784:2 1799:9 1814:16 1829:23 1844:30'
  .split(' ').map(w => w.split(':'));

// colour, width, x1, y1, x2, y2
const lines = [
  ['#00f', 1, 32, 86, 1863, 190], ['#f00', 1, 32, 164, 1863, 317],
  ['#00f', 1, 32, 400, 1863, 635], ['#00f', 1, 32, 472, 1863, 626],
  ['#f00', 1, 32, 509, 1863, 614], ['#f00', 1, 32, 838, 1350, 1008],
  ['#00f', 1, 32, 931, 1380, 1008],
  ['#f00', 2, 150, 73, 1863, 659], ['#f00', 2, 32, 471, 1863, 607],
  ['#f00', 2, 32, 565, 1863, 603],
  ['#ff0', 3, 60, 105, 1245, 1001], ['#ff0', 3, 32, 632, 1245, 1001]
];
const dashed = [[800, 74, 1863, 165], [35, 297, 1863, 401], [32, 317, 1863, 471], [35, 619, 1863, 854], [35, 719, 1863, 823]];

const priceY = p => Math.round(1000.4 - (p - 1.2) * 2317.5);
const path = (d, stroke, width = 1, dash = '') =>
  `<path d="${d}" fill="none" stroke="${stroke}" stroke-width="${width}" stroke-dasharray="${dash}"/>`;

let out = '';
let grid = '', ticks = '', minor = '';
for (let i = 0; i < 20; i++) {
  const y = priceY(1.2 + i * 0.02) + 0.5;
  grid += `M35 ${y}H1863`;
  ticks += `M32 ${y}h4M1860 ${y}h3`;
  for (const [x] of weeks) {
    const wx = Math.round((x - 2) / 3) * 3 + 2;
    minor += `M${wx} ${priceY(1.21 + i * 0.02) + 0.5}h1`;
    if (!i) ticks += `M${wx + 0.5} 75v2M${wx + 0.5} 1006v2`;
  }
}
for (const [x] of months) {
  grid += `M${x + 0.5} 75V1008`;
  ticks += `M${x + 0.5} 75v4M${x + 0.5} 1004v4`;
}
out += path(grid, '#c0c0c0', 1, '1 2') + path(minor + ticks, '#c0c0c0');
out += path('M1097.5 75V1008M1244.5 606V1008', '#c0c0c0');
for (const [a, b, c, d] of dashed) out += path(`M${a} ${b}.5L${c} ${d}.5`, '#808080', 1, '4 3 2 3');
for (const [color, w, a, b, c, d] of lines) {
  const h = w === 2 ? 0 : 0.5;
  out += path(`M${a} ${b + h}L${c} ${d + h}`, color, w);
}
out += path('M1244 594.5H1863', '#008080') + path('M1244 606.5H1863', '#000');

let bars = '';
for (const s of segments) {
  s.bars.split(' ').forEach((bar, i) => {
    const [h, l, c] = bar.split(',').map(v => Math.round(s.top + v / s.unit));
    const x = s.x + i * 3;
    bars += `M${x + 0.5} ${h}V${l}M${x + 1} ${c}.5h1`;
  });
}
out += path(bars, '#000') + path('M1863.5 75V1009M32 1008.5H1864', '#000');
document.getElementById('plot').innerHTML = out;

const px = x => ((x - 32) / 1832 * 100).toFixed(4) + '%';
const py = y => ((y - 75) / 934 * 100).toFixed(4) + '%';
document.getElementById('notes').innerHTML =
  `<text class="teal" x="${px(1245)}" y="${py(592)}">1.37546 (44.7%)</text>` +
  `<text x="${px(1245)}" y="${py(604)}">1.37005 (18.6%)</text>`;

document.getElementById('dates').innerHTML =
  weeks.map(([x, d]) => `<text x="${px(+x)}" y="10" text-anchor="middle">${d}</text>`).join('') +
  months.map(([x, m]) => `<text x="${px(x + 1)}" y="19">${m}</text>`).join('');

let labels = '';
for (let i = 0; i < 20; i++) {
  const p = 1.2 + i * 0.02;
  labels += `<text x="2" y="${py(priceY(p) + 4)}">${p.toFixed(2)}</text>`;
}
document.getElementById('prices').innerHTML = labels +
  `<rect x="0" y="${py(617)}" width="100%" height="14" fill="#000"/>` +
  `<text class="now" x="2" y="${py(628)}">1.3622</text>`;
```
